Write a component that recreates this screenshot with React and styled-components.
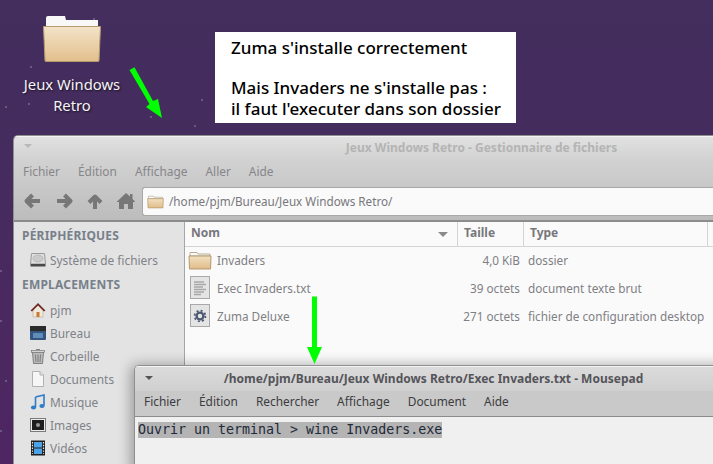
import React from 'react';
import styled, { createGlobalStyle } from 'styled-components';

const GlobalStyle = createGlobalStyle`
    html, body {
        margin: 0;
        padding: 0;
        overflow: hidden;
    }
    body {
        font-family: "Noto Sans", sans-serif;
    }
`;

const Desktop = styled.div`
    position: relative;
    width: 713px;
    height: 464px;
    overflow: hidden;
    background: linear-gradient(180deg, #432e5e 0%, #452c5e 35%, #4f2662 100%);
`;

const Star = styled.span`
    position: absolute;
    width: 2px;
    height: 2px;
    background: #6a5884;
`;

const DesktopIcon = styled.div`
    position: absolute;
    left: 14px;
    top: 16px;
    width: 116px;
    display: flex;
    flex-direction: column;
    align-items: center;
`;

const DesktopLabel = styled.div`
    margin-top: 12px;
    color: #f4f4f8;
    font-size: 14.8px;
    line-height: 21px;
    text-align: center;
    text-shadow: 1px 1px 2px #000a;
`;

const Note = styled.div`
    position: absolute;
    left: 215px;
    top: 32px;
    width: 301px;
    height: 91px;
    box-sizing: border-box;
    padding: 5px 16px;
    background: #fff;
    color: #000;
    font-family: "Noto Sans", sans-serif;
    font-size: 17px;
    font-weight: 500;
    line-height: 21px;
    white-space: nowrap;
`;

const NoteGap = styled.div`
    height: 19px;
`;

const Arrow = styled.svg`
    position: absolute;
    z-index: 5;
    left: 0;
    top: 0;
`;

const Window = styled.div`
    position: absolute;
    left: ${p => p.$left}px;
    top: ${p => p.$top}px;
    width: ${p => p.$width}px;
    height: ${p => p.$height}px;
    z-index: ${p => p.$z};
    display: flex;
    flex-direction: column;
    box-sizing: border-box;
    overflow: hidden;
    border-radius: 5px 5px 0 0;
    border: 1px solid #8f8f8f;
    border-right: 0;
    border-bottom: 0;
    box-shadow: ${p => p.$shadow ? '-3px 0 14px #0005' : 'none'};
`;

const TitleBar = styled.div`
    position: relative;
    flex: none;
    height: ${p => p.$height}px;
    display: flex;
    align-items: center;
    justify-content: center;
    background: ${p => p.$bg};
    box-shadow: inset 0 1px 0 #f4f4f4;
    color: ${p => p.$color};
    font-size: 12px;
    font-weight: 700;
    white-space: nowrap;
`;

const WindowMenuMark = styled.span`
    position: absolute;
    left: ${p => p.$left}px;
    top: ${p => p.$top}px;
    width: 0;
    height: 0;
    border-left: 4px solid transparent;
    border-right: 4px solid transparent;
    border-top: 4px solid ${p => p.$color};
`;

const ManagerChrome = styled.div`
    flex: none;
    height: 61px;
    background: linear-gradient(180deg, #d2d2d2, #bcbcbc);
    border-bottom: 2px solid #8c8c8c;
`;

const MenuBar = styled.div`
    display: flex;
    gap: ${p => p.$gap}px;
    height: ${p => p.$height}px;
    align-items: center;
    padding-left: ${p => p.$pad}px;
    color: ${p => p.$color};
    font-size: 11.9px;
`;

const ToolBar = styled.div`
    display: flex;
    align-items: center;
    height: 38px;
    padding-left: 8px;
`;

const ToolIcon = styled.svg`
    width: 20px;
    height: 20px;
    margin-right: 11px;
    flex: none;
    fill: #777;
`;

const ToolStroke = styled.path`
    fill: none;
    stroke: #777;
    stroke-width: 4;
    stroke-linejoin: round;
`;

const PathBar = styled.div`
    flex: 1;
    height: 29px;
    margin-left: -4px;
    box-sizing: border-box;
    display: flex;
    align-items: center;
    gap: 5px;
    padding-left: 4px;
    background: #fafafa;
    border: 1px solid #a8a8a8;
    border-right: 0;
    border-radius: 3px 0 0 3px;
    color: #77777c;
    font-size: 11.7px;
`;

const ManagerBody = styled.div`
    flex: 1;
    display: flex;
    min-height: 0;
`;

const Sidebar = styled.div`
    flex: none;
    width: 171px;
    background: #e3e3e3;
    border-right: 1px solid #a6a6a6;
    padding: 4px 0 0 8px;
    box-sizing: border-box;
`;

const SideHeading = styled.div`
    height: 19px;
    line-height: 19px;
    color: #77808a;
    font-size: 12px;
    font-weight: 700;
    letter-spacing: 0.2px;
    margin-top: ${p => p.$before}px;
    margin-bottom: ${p => p.$after}px;
`;

const SideItem = styled.div`
    display: flex;
    align-items: center;
    height: 23px;
    padding-left: 8px;
    gap: 4px;
    color: #7f8288;
    font-size: 11.9px;
    white-space: nowrap;
`;

const SideSlot = styled.span`
    width: 16px;
    height: 16px;
    flex: none;
    display: flex;
    align-items: center;
    justify-content: center;
`;

const FilePane = styled.div`
    flex: 1;
    background: #fafafa;
`;

const ColumnHeader = styled.div`
    display: flex;
    height: 25px;
    border-bottom: 1px solid #d4d4d4;
    box-sizing: border-box;
`;

const ColumnCell = styled.div`
    position: relative;
    flex: none;
    width: ${p => p.$width}px;
    padding-left: 6px;
    box-sizing: border-box;
    border-right: 1px solid #d4d4d4;
    line-height: 22px;
    color: #77777c;
    font-size: 12px;
    font-weight: 700;
`;

const SortMark = styled.span`
    position: absolute;
    right: 9px;
    top: 10px;
    width: 0;
    height: 0;
    border-left: 5px solid transparent;
    border-right: 5px solid transparent;
    border-top: 5px solid #8a8a8a;
`;

const FileList = styled.div`
    margin-top: -1px;
`;

const FileRow = styled.div`
    display: flex;
    align-items: center;
    height: 28px;
    color: #7f7f84;
    font-size: 11.75px;
    white-space: nowrap;
`;

const FileName = styled.div`
    flex: none;
    width: 242px;
    padding-left: 3px;
    box-sizing: border-box;
    display: flex;
    align-items: center;
    gap: 5px;
`;

const FileIconSlot = styled.span`
    flex: none;
    width: 24px;
    height: 24px;
    display: flex;
    align-items: center;
    justify-content: center;
`;

const FileSize = styled.div`
    flex: none;
    width: 93px;
    text-align: right;
`;

const FileType = styled.div`
    padding-left: 8px;
`;

const EditorMenu = styled.div`
    flex: none;
    padding-bottom: 5px;
    background: #c9c9c9;
    border-bottom: 1px solid #8c8c8c;
`;

const EditorArea = styled.div`
    flex: 1;
    background: #f0f0f0;
    padding: 0 0 0 3px;
`;

const EditorLine = styled.span`
    display: inline-block;
    height: 16px;
    line-height: 16px;
    background: #b4b4b4;
    color: #1e2a3a;
    font-family: "DejaVu Sans Mono", monospace;
    font-size: 13.3px;
    white-space: pre;
`;

const Folder = ({ size = 24 }) => (
    <svg width={size} height={size} viewBox="0 0 24 24">
        <defs>
            <linearGradient id={`f${size}`} x1="0" y1="0" x2="0" y2="1">
                <stop offset="0" stopColor="#f2dfc0" />
                <stop offset="1" stopColor="#e0bd8a" />
            </linearGradient>
        </defs>
        <path d="M2 6.5 L2 4.5 L9 4.5 L10 6 L22 6 L22 8 L2 8 Z" fill="#fafafa" stroke="#a89878" strokeWidth="0.8" />
        <path d="M1 8 L23 8 L22.5 21 L1.5 21 Z" fill={`url(#f${size})`} stroke="#b49a6c" strokeWidth="1" />
    </svg>
);

const BigFolder = () => (
    <svg width="58" height="46" viewBox="0 0 58 46">
        <defs>
            <linearGradient id="big" x1="0" y1="0" x2="0" y2="1">
                <stop offset="0" stopColor="#f3e3c9" />
                <stop offset="1" stopColor="#e2bf8c" />
            </linearGradient>
        </defs>
        <path d="M3 10 L3 2 Q3 0 5 0 L22 0 L23 4 L55 4 L55 10 Z" fill="#f8f8f8" />
        <path d="M0.5 10.5 L57.5 10.5 L56 44.5 Q56 45.5 55 45.5 L3 45.5 Q2 45.5 2 44.5 Z" fill="url(#big)" stroke="#b49a6c" strokeWidth="1" />
    </svg>
);

const TextDoc = ({ gear }) => (
    <svg width="20" height="24" viewBox="0 0 20 24">
        <rect x="0.5" y="0.5" width="19" height="22" fill="#e4e4e4" stroke="#a9a9a9" />
        {gear ? (
            <g>
                <circle cx="10" cy="12" r="3.4" fill="none" stroke="#4d5a72" strokeWidth="2.4" />
                <circle cx="10" cy="12" r="5.4" fill="none" stroke="#4d5a72" strokeWidth="1.8" strokeDasharray="2 2.24" />
            </g>
        ) : (
            <path d="M4 6h10M4 8.5h12M4 11h9M4 13.5h12M4 16h10M4 18.5h7" stroke="#a8a8a8" strokeWidth="1.4" />
        )}
    </svg>
);

const DiskIcon = () => (
    <svg width="16" height="16" viewBox="0 0 16 16">
        <path d="M1.5 1.5 H14.5 L15.5 12 H0.5 Z" fill="#dedede" stroke="#9a9a9a" />
        <ellipse cx="8" cy="6.5" rx="5" ry="3.4" fill="#cacaca" stroke="#aaa" strokeWidth="0.6" />
        <rect x="0.5" y="12" width="15" height="2.5" fill="#4a4a4a" />
    </svg>
);

const HomeIcon = () => (
    <svg width="16" height="16" viewBox="0 0 16 16">
        <path d="M3 8 V15 H13 V8 L8 3 Z" fill="#f0e8d8" stroke="#b8a890" strokeWidth="0.6" />
        <path d="M0.5 8.5 L8 1 L15.5 8.5 L14 9.5 L8 3.5 L2 9.5 Z" fill="#6d2a2a" />
        <rect x="6.5" y="10" width="3" height="5" fill="#c87a30" />
    </svg>
);

const DesktopFolderIcon = () => (
    <svg width="16" height="16" viewBox="0 0 16 16">
        <rect x="0" y="1" width="16" height="14" rx="1" fill="#32567e" />
        <rect x="0" y="1" width="16" height="5" fill="#2a2a2a" />
        <rect x="3" y="8" width="10" height="5" fill="#5f8db8" />
    </svg>
);

const TrashIcon = () => (
    <svg width="16" height="16" viewBox="0 0 16 16">
        <path d="M2.5 4 H13.5 L12.5 15.5 H3.5 Z" fill="#bcbcbc" stroke="#6a6a6a" strokeWidth="0.8" />
        <rect x="1.5" y="2.5" width="13" height="2" fill="#d4d4d4" stroke="#6a6a6a" strokeWidth="0.6" />
        <path d="M6 1.5 H10 M5.5 6.5 L6 14 M8 6.5 V14 M10.5 6.5 L10 14" stroke="#6a6a6a" strokeWidth="0.8" />
    </svg>
);

const DocIcon = () => (
    <svg width="16" height="16" viewBox="0 0 16 16">
        <path d="M2.5 0.5 H10 L13.5 4 V15.5 H2.5 Z" fill="#f6f6f6" stroke="#b2b2b2" />
        <path d="M10 0.5 V4 H13.5" fill="#e0e0e0" stroke="#b2b2b2" />
    </svg>
);

const MusicIcon = () => (
    <svg width="16" height="16" viewBox="0 0 16 16">
        <path d="M5.5 3 L14 1 V11.5 M5.5 3 V13" fill="none" stroke="#2f7cc8" strokeWidth="1.6" />
        <ellipse cx="3.5" cy="13.5" rx="2.6" ry="1.9" fill="#2f7cc8" />
        <ellipse cx="12" cy="12" rx="2.6" ry="1.9" fill="#2f7cc8" />
    </svg>
);

const ImagesIcon = () => (
    <svg width="16" height="16" viewBox="0 0 16 16">
        <rect x="0.5" y="1.5" width="15" height="13" fill="#ececec" stroke="#7a7a7a" />
        <rect x="2" y="3" width="12" height="10" fill="#1e1e1e" />
        <circle cx="8" cy="8" r="2" fill="#9a9a9a" />
    </svg>
);

const VideosIcon = () => (
    <svg width="16" height="16" viewBox="0 0 16 16">
        <rect x="1" y="0.5" width="14" height="15" fill="#1f1f1f" />
        <rect x="4" y="2" width="8" height="5.5" fill="#4aa3e8" />
        <rect x="4" y="8.5" width="8" height="5.5" fill="#4aa3e8" />
        <path d="M2.5 2v12M13.5 2v12" stroke="#e8e8e8" strokeWidth="1.2" strokeDasharray="1.4 1.4" />
    </svg>
);

const DownloadsIcon = () => (
    <svg width="16" height="16" viewBox="0 0 16 16">
        <circle cx="8" cy="8" r="7" fill="#6aa84f" />
    </svg>
);

const stars = [
    [30, 66], [28, 103], [5, 106], [201, 99], [150, 116], [194, 125], [93, 18], [0, 320], [0, 430], [0, 270], [5, 380]
];

const places = [
    ['pjm', <HomeIcon />],
    ['Bureau', <DesktopFolderIcon />],
    ['Corbeille', <TrashIcon />],
    ['Documents', <DocIcon />],
    ['Musique', <MusicIcon />],
    ['Images', <ImagesIcon />],
    ['Vidéos', <VideosIcon />],
    ['', <DownloadsIcon />],
];

const files = [
    ['Invaders', <Folder />, '4,0 KiB', 'dossier'],
    ['Exec Invaders.txt', <TextDoc />, '39 octets', 'document texte brut'],
    ['Zuma Deluxe', <TextDoc gear />, '271 octets', 'fichier de configuration desktop'],
];

const App = () => (
    <Desktop>
        <GlobalStyle />
        {stars.map(([x, y]) => <Star key={`${x}-${y}`} style={{ left: x, top: y }} />)}

        <DesktopIcon>
            <BigFolder />
            <DesktopLabel>Jeux Windows<br />Retro</DesktopLabel>
        </DesktopIcon>

        <Note>
            <div>Zuma s'installe correctement</div>
            <NoteGap />
            <div>Mais Invaders ne s'installe pas :</div>
            <div>il faut l'executer dans son dossier</div>
        </Note>

        <Arrow width="713" height="464" viewBox="0 0 713 464">
            <path d="M129.5 70 L134.5 67.3 L153 101 L158 99 L162 118 L146 107 L149.5 104 Z" fill="#00ff00" />
            <path d="M312 296.5 H317 V347 H322 L314.5 364 L307 347 H312 Z" fill="#00ff00" />
        </Arrow>

        <Window $left={13} $top={135} $width={936} $height={340} $z={1}>
            <TitleBar $height={23} $bg="linear-gradient(180deg, #e2e2e2, #d2d2d2)" $color="#b4b4b4">
                Jeux Windows Retro - Gestionnaire de fichiers
                <WindowMenuMark $left={10} $top={8} $color="#b8b8b8" />
            </TitleBar>
            <ManagerChrome>
                <MenuBar $gap={18} $height={23} $pad={9} $color="#86868a">
                    <span>Fichier</span><span>Édition</span><span>Affichage</span><span>Aller</span><span>Aide</span>
                </MenuBar>
                <ToolBar>
                    <ToolIcon viewBox="0 0 20 20"><ToolStroke d="M5 10 H18 M10.5 4 L4.5 10 L10.5 16" /></ToolIcon>
                    <ToolIcon viewBox="0 0 20 20"><ToolStroke d="M17 10 H4 M11.5 4 L17.5 10 L11.5 16" /></ToolIcon>
                    <ToolIcon viewBox="0 0 20 20"><ToolStroke d="M11 18 V6 M5 11.5 L11 5.5 L17 11.5" /></ToolIcon>
                    <ToolIcon viewBox="0 0 20 20"><path d="M11 2 L15 5.5 V3 H17.5 V8 L20.5 11 H18 V18 H13 V13 H9 V18 H4 V11 H1.5 Z" /></ToolIcon>
                    <PathBar>
                        <Folder size={17} />
                        /home/pjm/Bureau/Jeux Windows Retro/
                    </PathBar>
                </ToolBar>
            </ManagerChrome>
            <ManagerBody>
                <Sidebar>
                    <SideHeading $before={0} $after={3}>PÉRIPHÉRIQUES</SideHeading>
                    <SideItem><SideSlot><DiskIcon /></SideSlot>Système de fichiers</SideItem>
                    <SideHeading $before={4} $after={4}>EMPLACEMENTS</SideHeading>
                    {places.map(([label, icon]) => (
                        <SideItem key={label}><SideSlot>{icon}</SideSlot>{label}</SideItem>
                    ))}
                </Sidebar>
                <FilePane>
                    <ColumnHeader>
                        <ColumnCell $width={273}>Nom<SortMark /></ColumnCell>
                        <ColumnCell $width={66}>Taille</ColumnCell>
                        <ColumnCell $width={184}>Type</ColumnCell>
                    </ColumnHeader>
                    <FileList>
                        {files.map(([name, icon, size, type]) => (
                            <FileRow key={name}>
                                <FileName><FileIconSlot>{icon}</FileIconSlot>{name}</FileName>
                                <FileSize>{size}</FileSize>
                                <FileType>{type}</FileType>
                            </FileRow>
                        ))}
                    </FileList>
                </FilePane>
            </ManagerBody>
        </Window>

        <Window $left={134} $top={365} $width={598} $height={110} $z={2} $shadow>
            <TitleBar $height={25} $bg="linear-gradient(180deg, #dcdcdc, #cfcfcf)" $color="#55555a">
                /home/pjm/Bureau/Jeux Windows Retro/Exec Invaders.txt - Mousepad
                <WindowMenuMark $left={10} $top={10} $color="#555" />
            </TitleBar>
            <EditorMenu>
                <MenuBar $gap={18} $height={20} $pad={9} $color="#3c3c40">
                    <span>Fichier</span><span>Édition</span><span>Rechercher</span><span>Affichage</span><span>Document</span><span>Aide</span>
                </MenuBar>
            </EditorMenu>
            <EditorArea>
                <EditorLine>Ouvrir un terminal &gt; wine Invaders.exe</EditorLine>
            </EditorArea>
        </Window>
    </Desktop>
);

export default App;
